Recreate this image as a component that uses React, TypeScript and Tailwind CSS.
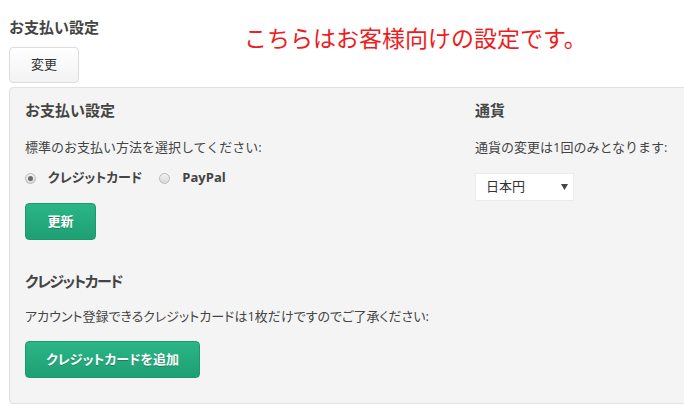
import React from "react";

const font = "font-['Open_Sans','Noto_Sans_CJK_JP',sans-serif]";

function Radio({ checked, label }: { checked?: boolean; label: string }) {
  return (
    <label className="flex items-center">
      <span className="flex h-[11px] w-[11px] items-center justify-center rounded-full border border-[#b9b9b9] bg-gradient-to-b from-[#f2f2f2] to-[#d9d9d9]">
        {checked && <span className="h-[5px] w-[5px] rounded-full bg-[#6a6a6a]" />}
      </span>
      <span className="ml-[12px] text-[13px] font-bold text-[#444] [font-feature-settings:'palt']">
        {label}
      </span>
    </label>
  );
}

function GreenButton({ children, w }: { children: React.ReactNode; w: string }) {
  return (
    <button
      className={`${w} h-[37px] rounded-[4px] border border-[#1c9a6f] bg-gradient-to-b from-[#2bb686] to-[#1e9f74] text-[13px] font-bold text-white [text-shadow:0_1px_0_rgba(0,0,0,0.25)] [font-feature-settings:'palt']`}
    >
      {children}
    </button>
  );
}

export default function App() {
  return (
    <div className={`${font} relative h-[405px] w-[684px] overflow-hidden bg-white text-[#444]`}>
      <div className="pl-[9px]">
        <div className="flex items-start">
          <div>
            <h2 className="mt-[17px] text-[15px] font-bold leading-[20px]">お支払い設定</h2>
            <button className="mt-[10px] h-[36px] w-[70px] rounded-[4px] border border-[#dcdcdc] bg-gradient-to-b from-white to-[#f3f3f3] text-[13px] text-[#333]">
              変更
            </button>
          </div>
          <p className="ml-[145px] mt-[24px] text-[23px] leading-[28px] text-[#ee1c1c]">
            こちらはお客様向けの設定です。
          </p>
        </div>

        <div className="mt-[4px] w-[700px] rounded-[4px] border border-[#e2e2e2] bg-[#f4f4f4] pb-[25px] pl-[15px] pt-[12px]">
          <div className="grid grid-cols-[450px_1fr]">
            <div>
              <h3 className="text-[15px] font-bold leading-[20px]">お支払い設定</h3>
              <p className="mt-[17px] text-[13px] leading-[20px]">標準のお支払い方法を選択してください:</p>
              <div className="mt-[11px] flex h-[20px] items-center gap-[17px]">
                <Radio checked label="クレジットカード" />
                <Radio label="PayPal" />
              </div>
              <div className="mt-[15px]">
                <GreenButton w="w-[71px]">更新</GreenButton>
              </div>
            </div>
            <div>
              <h3 className="text-[15px] font-bold leading-[20px]">通貨</h3>
              <p className="mt-[17px] text-[13px] leading-[20px]">通貨の変更は1回のみとなります:</p>
              <div className="mt-[16px] flex h-[28px] w-[99px] items-center justify-between border border-[#ececec] bg-white pl-[10px] pr-[5px] text-[13px] text-[#333]">
                <span>日本円</span>
                <svg width="7" height="6" viewBox="0 0 7 6">
                  <path d="M0 0H7L3.5 6Z" fill="#444" />
                </svg>
              </div>
            </div>
          </div>

          <h3 className="mt-[31px] text-[15px] font-bold leading-[20px] tracking-[-1.5px] [font-feature-settings:'palt']">
            クレジットカード
          </h3>
          <p className="mt-[15px] text-[13px] leading-[20px] [font-feature-settings:'palt']">
            アカウント登録できるクレジットカードは1枚だけですのでご了承ください:
          </p>
          <div className="mt-[15px]">
            <GreenButton w="w-[175px]">クレジットカードを追加</GreenButton>
          </div>
        </div>
      </div>
    </div>
  );
}
